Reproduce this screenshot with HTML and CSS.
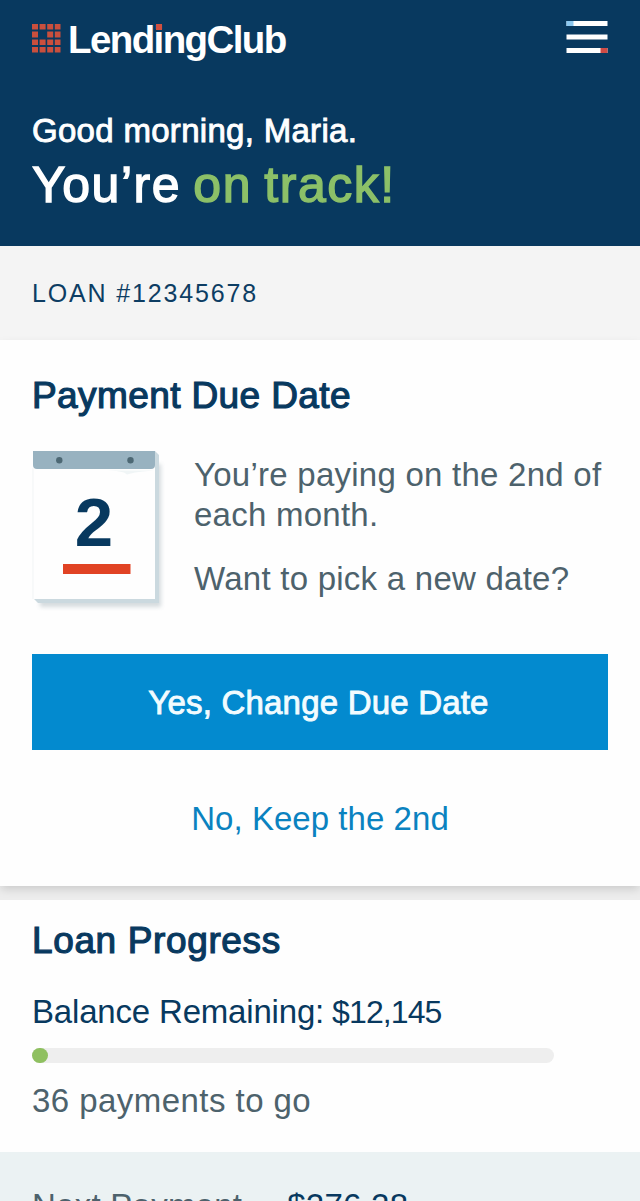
FILE: index.html
```html
<!DOCTYPE html>
<html lang="en">
<head>
<meta charset="utf-8">
<title>LendingClub</title>
<link rel="stylesheet" href="styles.css">
</head>
<body>
<header class="header">
  <div class="topbar">
    <div class="brand">
      <svg class="brand-mark" width="29" height="29" viewBox="0 0 29 29" fill="#c94f3d">
        <path d="M0 0h6v5.500H0zM7.600 0h6v5.500h-6zM15.200 0h6v5.500h-6zM22.800 0h5.700v5.500h-5.700zM0 7.500h6v6H0zM15.200 7.500h6v6h-6zM22.800 7.500h5.700v6h-5.700zM0 15.500h6v5.500H0zM7.600 15.500h6v5.500h-6zM15.200 15.500h6v5.500h-6zM22.800 15.500h5.700v5.500h-5.700zM0 23h6v5.500H0zM7.600 23h6v5.500h-6zM15.200 23h6v5.500h-6zM22.800 23h5.700v5.500h-5.700z"/>
      </svg>
      <span class="brand-name">Lend<span class="brand-i">i</span>ngClub</span>
    </div>
    <svg class="menu" width="42" height="33" viewBox="0 0 42 33">
      <path fill="#fff" d="M.500 0h41v5h-41zM.500 13.500h41v5h-41zM.500 27h41v5h-41z"/>
      <path fill="#8cc8f0" d="M.500 0h7v5h-7z"/>
      <path fill="#cf4b45" d="M34.500 27h7v5h-7z"/>
    </svg>
  </div>
  <p class="greeting">Good morning, Maria.</p>
  <h1 class="headline">You’re <span class="on-track">on track!</span></h1>
</header>
<div class="loan-id">LOAN #12345678</div>
<main>
  <section class="card due">
    <h2 class="title due-title">Payment Due Date</h2>
    <div class="due-row">
      <svg class="calendar" width="140" height="166" viewBox="0 0 140 166">
        <defs><filter id="soft" x="-20%" y="-20%" width="140%" height="140%"><feGaussianBlur stdDeviation="2"/></filter></defs>
        <path d="M8 14H129V157H8z" fill="#5c7480" opacity=".25" filter="url(#soft)"/>
        <path d="M123 1l4 4V153H6l-4-4z" fill="#cbd9df"/>
        <path d="M1 8H123V149H1z" fill="#fefefe"/>
        <path d="M1 18v131" stroke="#f1f4f5"/>
        <path d="M3 20.500h72q10 0 17 2l3 2 8-2 8-1 11-1z" fill="#f0f5f6"/>
        <path d="M1 1H123V15q0 4-4 4H5q-4 0-4-4z" fill="#98b2c0"/>
        <circle cx="27.300" cy="10.300" r="3.200" fill="#4d6874"/>
        <circle cx="98.500" cy="10.300" r="3.200" fill="#4d6874"/>
        <text class="calendar-day" x="62" y="96" text-anchor="middle">2</text>
        <path d="M31 114h67.500v10H31z" fill="#e14324"/>
      </svg>
      <div class="due-text">
        <p>You’re paying on the 2nd of each month.</p>
        <p>Want to pick a new date?</p>
      </div>
    </div>
    <button class="primary">Yes, Change Due Date</button>
    <a class="secondary">No, Keep the 2nd</a>
  </section>
  <section class="card progress">
    <h2 class="title">Loan Progress</h2>
    <p class="balance">Balance Remaining: <span class="amount">$12,145</span></p>
    <div class="bar"><div class="bar-fill"></div></div>
    <p class="remaining">36 payments to go</p>
  </section>
  <section class="next">
    <span class="next-label">Next Payment</span>
    <span class="next-amount">$276.28</span>
  </section>
</main>
</body>
</html>
```
FILE: styles.css
```css
* { box-sizing: border-box; margin: 0; padding: 0; }
html { height: 1201px; overflow: hidden; }
body {
  height: 1201px;
  overflow: hidden;
  background: #ededed;
  font-family: "Liberation Sans", Arial, sans-serif;
  font-size: 33px;
  line-height: 40px;
  letter-spacing: .250px;
  color: #4d626c;
}
.header { height: 246px; padding: 19px 32px 0; background: #08395f; color: #fff; }
.topbar { display: flex; justify-content: space-between; height: 92px; }
.brand { display: flex; gap: 7px; height: 40px; }
.brand-mark { margin-top: 5px; }
.brand-name {
  margin-top: 1px;
  font-size: 38.500px;
  font-weight: 700;
  letter-spacing: -1.600px;
}
.brand-i { position: relative; }
.brand-i::before {
  content: "";
  position: absolute;
  left: 2px;
  top: 6px;
  width: 6px;
  height: 6px;
  background: #d1503f;
}
.menu { margin-top: 2px; }
.greeting { letter-spacing: .3px; -webkit-text-stroke: .9px; }
.headline {
  margin-top: 4px;
  font-size: 50px;
  font-weight: 400;
  line-height: 60px;
  letter-spacing: 1.500px;
  word-spacing: -3px;
  -webkit-text-stroke: 1.400px;
}
.on-track { color: #8cc068; }
.loan-id {
  height: 94px;
  background: #f4f4f4;
  color: #0d3d63;
  font-size: 25px;
  line-height: 95px;
  letter-spacing: 1.850px;
  padding-left: 32px;
}
.card { background: #fefefe; padding: 34px 32px 0; }
.title {
  color: #08395f;
  font-size: 37px;
  font-weight: 400;
  line-height: 44px;
  letter-spacing: .630px;
  -webkit-text-stroke: 1.200px;
}
.due-title { letter-spacing: .4px; }
.due {
  position: relative;
  height: 546px;
  box-shadow: 0 4px 9px -1px rgba(0, 0, 0, .15);
}
.due-row { display: flex; gap: 22px; height: 204px; margin-top: 32px; }
.calendar { flex: none; }
.calendar-day { font-size: 69px; font-weight: 700; letter-spacing: 0; fill: #08395f; }
.due-text { display: flex; flex-direction: column; gap: 24px; padding-top: 5px; margin-right: -16px; }
.primary {
  display: block;
  width: 100%;
  height: 96px;
  margin-bottom: 49px;
  padding: 2px 3px 0 0;
  border: 0;
  background: #038acf;
  color: #f2fcff;
  font: inherit;
  letter-spacing: .2px;
  -webkit-text-stroke: .9px;
}
.secondary { display: block; text-align: center; color: #0a82c0; letter-spacing: .05px; }
.progress { height: 252px; margin-top: 14px; padding-top: 19px; }
.balance { margin-top: 29px; color: #08395f; letter-spacing: -.180px; }
.amount { margin-left: -1px; font-size: 32px; letter-spacing: -.900px; }
.bar { width: 522px; height: 15px; margin: 16px 0 18px; border-radius: 8px; background: #eee; }
.bar-fill { width: 16px; height: 15px; border-radius: 8px; background: #8fc060; }
.remaining { letter-spacing: .450px; }
.next {
  display: flex;
  gap: 45px;
  height: 49px;
  padding: 34px 32px 0;
  overflow: hidden;
  background: #ebf2f3;
  letter-spacing: .250px;
}
.next-amount { color: #08395f; }
```
